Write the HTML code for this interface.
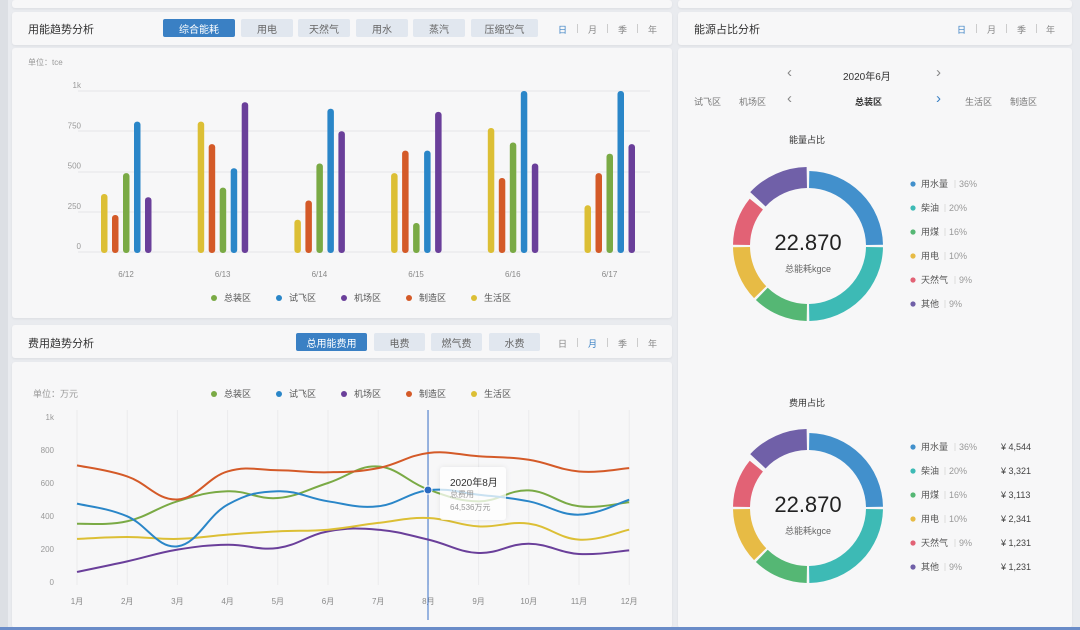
<!DOCTYPE html>
<html><head><meta charset="utf-8">
<style>
*{margin:0;padding:0;box-sizing:border-box}
body{width:1080px;height:630px;overflow:hidden;background:#e9ebef;font-family:"Liberation Sans","Noto Sans CJK SC",sans-serif;position:relative;color:#333}
.card{position:absolute;background:#f7f7f8;border-radius:3px;box-shadow:0 1px 2px rgba(0,0,0,.06)}
.t{position:absolute;white-space:nowrap}
.btn{position:absolute;height:18px;background:#e1e7ef;color:#666;font-size:10px;display:flex;align-items:center;justify-content:center;border-radius:2px;padding-top:1px}
.btn.on{background:#3a80c4;color:#fff}
.tab{position:absolute;font-size:9px;color:#888}
.pipe{position:absolute;width:1px;height:9px;background:#ccc}
svg{position:absolute;left:0;top:0}
</style></head><body>
<div style="position:absolute;left:0;top:0;width:8px;height:630px;background:#dcdfe4"></div>
<div class="card" style="left:12px;top:0;width:660px;height:8px"></div>
<div class="card" style="left:678px;top:0;width:394px;height:8px"></div>

<div class="card" style="left:12px;top:12px;width:660px;height:33px"></div>
<div class="t" style="left:28px;top:21px;font-size:11px;color:#333">用能趋势分析</div>
<div class="btn on" style="left:163px;top:19px;width:72px">综合能耗</div>
<div class="btn" style="left:241px;top:19px;width:52px">用电</div>
<div class="btn" style="left:298px;top:19px;width:52px">天然气</div>
<div class="btn" style="left:356px;top:19px;width:52px">用水</div>
<div class="btn" style="left:413px;top:19px;width:52px">蒸汽</div>
<div class="btn" style="left:471px;top:19px;width:67px">压缩空气</div>
<div class="tab" style="left:558px;top:23px;color:#3a80c4">日</div><div class="pipe" style="left:577px;top:24px"></div>
<div class="tab" style="left:588px;top:23px">月</div><div class="pipe" style="left:607px;top:24px"></div>
<div class="tab" style="left:618px;top:23px">季</div><div class="pipe" style="left:637px;top:24px"></div>
<div class="tab" style="left:648px;top:23px">年</div>
<div class="card" style="left:12px;top:48px;width:660px;height:270px"></div>
<div class="t" style="left:28px;top:57px;font-size:8px;color:#999">单位：tce</div>

<div class="card" style="left:12px;top:325px;width:660px;height:33px"></div>
<div class="t" style="left:28px;top:335px;font-size:11px;color:#333">费用趋势分析</div>
<div class="btn on" style="left:296px;top:333px;width:71px">总用能费用</div>
<div class="btn" style="left:374px;top:333px;width:51px">电费</div>
<div class="btn" style="left:431px;top:333px;width:51px">燃气费</div>
<div class="btn" style="left:489px;top:333px;width:51px">水费</div>
<div class="tab" style="left:558px;top:337px">日</div><div class="pipe" style="left:577px;top:338px"></div>
<div class="tab" style="left:588px;top:337px;color:#3a80c4">月</div><div class="pipe" style="left:607px;top:338px"></div>
<div class="tab" style="left:618px;top:337px">季</div><div class="pipe" style="left:637px;top:338px"></div>
<div class="tab" style="left:648px;top:337px">年</div>
<div class="card" style="left:12px;top:362px;width:660px;height:266px"></div>
<div class="t" style="left:33px;top:387px;font-size:9px;color:#999">单位：万元</div>

<div class="card" style="left:678px;top:12px;width:394px;height:33px"></div>
<div class="t" style="left:694px;top:21px;font-size:11px;color:#333">能源占比分析</div>
<div class="tab" style="left:957px;top:23px;color:#3a80c4">日</div><div class="pipe" style="left:976px;top:24px"></div>
<div class="tab" style="left:987px;top:23px">月</div><div class="pipe" style="left:1006px;top:24px"></div>
<div class="tab" style="left:1017px;top:23px">季</div><div class="pipe" style="left:1036px;top:24px"></div>
<div class="tab" style="left:1046px;top:23px">年</div>
<div class="card" style="left:678px;top:48px;width:394px;height:580px"></div>
<div class="t" style="left:787px;top:64px;font-size:15px;color:#888">‹</div>
<div class="t" style="left:843px;top:68px;font-size:10px;color:#333">2020年6月</div>
<div class="t" style="left:936px;top:64px;font-size:15px;color:#888">›</div>
<div class="t" style="left:694px;top:95px;font-size:9px;color:#777">试飞区</div>
<div class="t" style="left:739px;top:95px;font-size:9px;color:#777">机场区</div>
<div class="t" style="left:787px;top:90px;font-size:15px;color:#888">‹</div>
<div class="t" style="left:855px;top:95px;font-size:9px;color:#333;font-weight:bold">总装区</div>
<div class="t" style="left:936px;top:90px;font-size:15px;color:#3a80c4">›</div>
<div class="t" style="left:965px;top:95px;font-size:9px;color:#777">生活区</div>
<div class="t" style="left:1010px;top:95px;font-size:9px;color:#777">制造区</div>
<div class="t" style="left:789px;top:133px;font-size:9px;color:#333">能量占比</div>
<div class="t" style="left:789px;top:396px;font-size:9px;color:#333">费用占比</div>
<div class="t" style="left:808px;top:230px;width:0"><div style="position:absolute;left:-50px;width:100px;text-align:center;font-size:22px;color:#222">22.870</div></div>
<div class="t" style="left:808px;top:262px;width:0"><div style="position:absolute;left:-50px;width:100px;text-align:center;font-size:9px;color:#666">总能耗kgce</div></div>
<div class="t" style="left:808px;top:492px;width:0"><div style="position:absolute;left:-50px;width:100px;text-align:center;font-size:22px;color:#222">22.870</div></div>
<div class="t" style="left:808px;top:524px;width:0"><div style="position:absolute;left:-50px;width:100px;text-align:center;font-size:9px;color:#666">总能耗kgce</div></div>

<div style="position:absolute;left:440px;top:467px;width:66px;height:53px;background:rgba(255,255,255,.75);box-shadow:0 0 6px rgba(0,0,0,.08);border-radius:3px;z-index:5"></div>
<div class="t" style="left:450px;top:474px;font-size:10px;color:#333;z-index:6">2020年8月</div>
<div class="t" style="left:450px;top:489px;font-size:8px;color:#999;z-index:6">总费用</div>
<div class="t" style="left:450px;top:502px;font-size:8px;color:#999;z-index:6">64,536万元</div>

<div style="position:absolute;left:0;top:627px;width:1080px;height:3px;background:#6a8cc8"></div>

<svg id="s" width="1080" height="630" style="z-index:3"></svg>
<script>
var s=document.getElementById('s'),h='';
var C={g:'#7aaa45',b:'#2a86c8',p:'#6a3f9a',o:'#d45a28',y:'#dcbf35'};
[91,131,172,212,252].forEach(function(y){h+='<line x1="78" x2="650" y1="'+y+'" y2="'+y+'" stroke="#e6e6e8" stroke-width="1"/>'});
['1k','750','500','250','0'].forEach(function(t,i){h+='<text x="81" y="'+(88+i*40.3)+'" font-size="8" fill="#999" text-anchor="end">'+t+'</text>'});
var B=[[360,230,490,810,340],[810,670,400,520,930],[200,320,550,890,750],[490,630,180,630,870],[770,460,680,1000,550],[290,490,610,1000,670]];
var bc=[C.y,C.o,C.g,C.b,C.p];
var labs=['6/12','6/13','6/14','6/15','6/16','6/17'];
B.forEach(function(g,i){var x0=104+i*96.7;g.forEach(function(v,j){var x=x0+j*11,hh=v*0.161;h+='<rect x="'+(x-3)+'" y="'+(252-hh)+'" width="6.5" height="'+(hh+1)+'" rx="3" fill="'+bc[j]+'"/>'});
h+='<text x="'+(x0+22)+'" y="277" font-size="8" fill="#888" text-anchor="middle">'+labs[i]+'</text>'});
var L=[['总装区',C.g,214],['试飞区',C.b,279],['机场区',C.p,344],['制造区',C.o,409],['生活区',C.y,474]];
L.forEach(function(l){h+='<circle cx="'+l[2]+'" cy="298" r="3" fill="'+l[1]+'"/><text x="'+(l[2]+10)+'" y="301" font-size="9" fill="#555">'+l[0]+'</text>'});
L.forEach(function(l){h+='<circle cx="'+l[2]+'" cy="394" r="3" fill="'+l[1]+'"/><text x="'+(l[2]+10)+'" y="397" font-size="9" fill="#555">'+l[0]+'</text>'});
for(var i=0;i<12;i++){var x=77+i*50.2;h+='<line x1="'+x+'" x2="'+x+'" y1="410" y2="585" stroke="#ebebed"/>';h+='<text x="'+x+'" y="604" font-size="8" fill="#888" text-anchor="middle">'+(i+1)+'月</text>'}
['1k','800','600','400','200','0'].forEach(function(t,i){h+='<text x="54" y="'+(420+i*33)+'" font-size="8" fill="#999" text-anchor="end">'+t+'</text>'});
h+='<line x1="428" x2="428" y1="410" y2="620" stroke="#3a70c8" stroke-width="1"/>';
var D={o:[707,640,500,670,677,665,690,782,762,741,670,690],g:[353,368,489,550,509,600,700,560,489,555,459,483],b:[475,398,216,469,550,489,459,556,529,489,408,499],y:[261,273,261,287,307,317,358,388,337,354,257,317],p:[61,125,196,226,206,307,317,257,176,232,170,192]};
function path(a){var P=a.map(function(v,i){return[77+i*50.2,582-v*0.165]});var d='M'+P[0][0]+','+P[0][1];for(var i=0;i<P.length-1;i++){var p0=P[i-1]||P[i],p1=P[i],p2=P[i+1],p3=P[i+2]||p2;var t=0.2;d+=' C'+(p1[0]+(p2[0]-p0[0])*t)+','+(p1[1]+(p2[1]-p0[1])*t)+' '+(p2[0]-(p3[0]-p1[0])*t)+','+(p2[1]-(p3[1]-p1[1])*t)+' '+p2[0]+','+p2[1]}return d}
['p','y','g','b','o'].forEach(function(k){h+='<path d="'+path(D[k])+'" fill="none" stroke="'+C[k]+'" stroke-width="2"/>'});
h+='<circle cx="428" cy="490" r="4" fill="#2a6ac0" stroke="#fff" stroke-width="1"/>';
var DC=['#4290cc','#3dbab5','#55b774','#e7bb45','#e26275','#7060a8'];
var segs=[[0,90],[90,180],[180,225],[225,270],[270,310],[310,360]];
function arc(cx,cy,R,r,a0,a1){function pt(rr,a){a=(a-90)*Math.PI/180;return[cx+rr*Math.cos(a),cy+rr*Math.sin(a)]}var A=pt(R,a0),B2=pt(R,a1),c=pt(r,a1),d=pt(r,a0);var lg=(a1-a0)>180?1:0;return'M'+A+' A'+R+','+R+' 0 '+lg+' 1 '+B2+' L'+c+' A'+r+','+r+' 0 '+lg+' 0 '+d+'Z'}
[[808,246],[808,508]].forEach(function(c,k){segs.forEach(function(s2,i){var R=75,r=58,a0=s2[0]+1,a1=s2[1]-1;if(i==5){R=79;a0=s2[0]+3}h+='<path d="'+arc(c[0],c[1],R,r,a0,a1)+'" fill="'+DC[i]+'"/>'})});
var names=['用水量','柴油','用煤','用电','天然气','其他'],pc=['36%','20%','16%','10%','9%','9%'],am=['¥ 4,544','¥ 3,321','¥ 3,113','¥ 2,341','¥ 1,231','¥ 1,231'];
[[184,0],[447,1]].forEach(function(b){names.forEach(function(n,i){var y=b[0]+i*24,w=n.length*10;h+='<circle cx="913" cy="'+y+'" r="2.6" fill="'+DC[i]+'"/><text x="921" y="'+(y+3)+'" font-size="9" fill="#555">'+n+'</text><line x1="'+(925+w)+'" x2="'+(925+w)+'" y1="'+(y-4)+'" y2="'+(y+4)+'" stroke="#ddd"/><text x="'+(929+w)+'" y="'+(y+3)+'" font-size="9" fill="#999">'+pc[i]+'</text>';if(b[1])h+='<text x="1001" y="'+(y+3)+'" font-size="9" fill="#444">'+am[i]+'</text>'})});
s.innerHTML=h;
</script>
</body></html>
